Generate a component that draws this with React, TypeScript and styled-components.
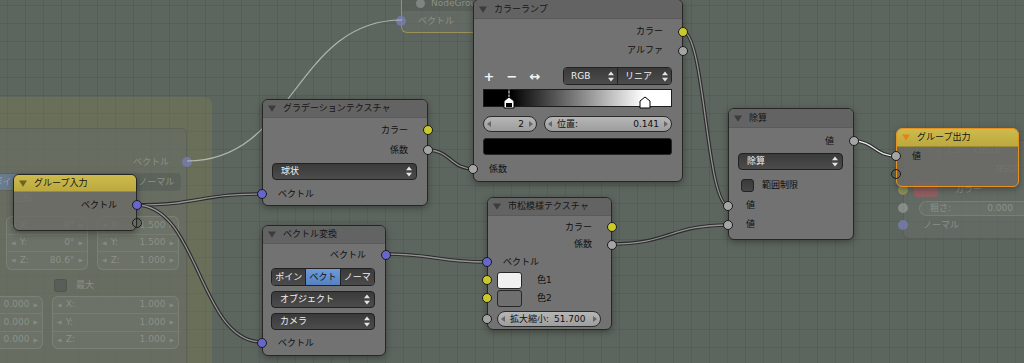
import styled, { createGlobalStyle } from 'styled-components'

const YELLOW = '#c9c92e'
const GRAY = '#a4a4a4'
const BLUE = '#6666cc'

const GlobalStyle = createGlobalStyle`
  html, body { margin: 0; padding: 0; }
  body {
    background: #5d665e;
    font-family: "DejaVu Sans", "Noto Sans CJK JP", sans-serif;
    font-size: 9px;
    line-height: 1;
  }
`

const Canvas = styled.div`
  position: relative;
  width: 1024px;
  height: 363px;
  overflow: hidden;
  background-color: #5d665e;
  background-image: linear-gradient(rgba(0, 0, 0, 0.07) 1px, transparent 1px),
    linear-gradient(90deg, rgba(0, 0, 0, 0.07) 1px, transparent 1px);
  background-size: 18px 18px;
  background-position: 7px 5px;
`

/* ---------- ghost (faded) layer ---------- */

const Frame = styled.div`
  position: absolute;
  left: -20px;
  top: 97px;
  width: 232px;
  height: 300px;
  border-radius: 8px;
  background: rgba(135, 132, 78, 0.33);
`

const Ghost = styled.div<{ $x: number; $y: number; $w: number; $h: number; $frame?: boolean }>`
  position: absolute;
  left: ${p => p.$x}px;
  top: ${p => p.$y}px;
  width: ${p => p.$w}px;
  height: ${p => p.$h}px;
  box-sizing: border-box;
  border-radius: 6px;
  border: 1px solid ${p => (p.$frame ? 'rgba(200, 180, 80, 0.55)' : 'rgba(0, 0, 0, 0.1)')};
  background: rgba(102, 108, 104, 0.6);
  color: #8b9087;
  display: flex;
  flex-direction: column;
`

const GhostHeader = styled.div`
  height: 22px;
  flex: none;
  display: flex;
  align-items: flex-end;
  gap: 6px;
  padding: 0 0 3px 14px;
  box-sizing: border-box;
  background: rgba(80, 86, 82, 0.5);
  border-radius: 5px 5px 0 0;
`

const GhostTitle = styled.div`
  height: 18px;
  flex: none;
  display: flex;
  align-items: center;
  padding-left: 22px;
  color: rgba(150, 155, 148, 0.55);
`

const GhostRow = styled.div<{ $h?: number; $mt?: number; $out?: boolean; $pl?: number; $pr?: number }>`
  position: relative;
  flex: none;
  height: ${p => p.$h ?? 20}px;
  margin-top: ${p => p.$mt ?? 0}px;
  display: flex;
  align-items: center;
  justify-content: ${p => (p.$out ? 'flex-end' : 'flex-start')};
  padding-left: ${p => p.$pl ?? 0}px;
  padding-right: ${p => p.$pr ?? 0}px;
  gap: 9px;
`

const GhostSocket = styled.span<{ $c: string; $side: 'l' | 'r' }>`
  position: absolute;
  top: 50%;
  width: 10px;
  height: 10px;
  margin-top: -5px;
  border-radius: 50%;
  background: ${p => p.$c};
  ${p => (p.$side === 'l' ? 'left: -6px;' : 'right: -6px;')}
`

const GhostSegs = styled.div`
  display: flex;
  height: 16px;
  width: 192px;
  border-radius: 4px;
  overflow: hidden;
  border: 1px solid rgba(0, 0, 0, 0.08);
`

const GhostSeg = styled.div<{ $on?: boolean }>`
  flex: 1;
  display: flex;
  align-items: center;
  justify-content: center;
  white-space: nowrap;
  overflow: hidden;
  background: ${p => (p.$on ? 'rgba(110, 135, 175, 0.55)' : 'rgba(80, 86, 82, 0.45)')};
  color: ${p => (p.$on ? 'rgba(150, 170, 200, 0.8)' : '#8d9289')};
  & + & {
    border-left: 1px solid rgba(0, 0, 0, 0.08);
  }
`

const GhostBlock = styled.div<{ $w: number }>`
  width: ${p => p.$w}px;
  box-sizing: border-box;
  border: 1px solid rgba(175, 180, 170, 0.22);
  border-radius: 6px;
  background: rgba(150, 156, 148, 0.12);
  display: flex;
  flex-direction: column;
`

const GhostField = styled.div`
  height: 16.5px;
  display: flex;
  align-items: center;
  gap: 4px;
  padding: 0 4px;
  & + & {
    border-top: 1px solid rgba(175, 180, 170, 0.16);
  }
`

const GhostValue = styled.span`
  flex: 1;
  text-align: right;
`

const GhostArrow = styled.span`
  font-size: 6px;
  color: rgba(150, 155, 145, 0.6);
`

const GhostBlocks = styled.div<{ $mt: number; $pl: number }>`
  display: flex;
  gap: 9px;
  margin-top: ${p => p.$mt}px;
  padding-left: ${p => p.$pl}px;
`

const GhostCheck = styled.span`
  width: 11px;
  height: 11px;
  border-radius: 3px;
  background: rgba(80, 86, 82, 0.6);
  border: 1px solid rgba(0, 0, 0, 0.1);
`

const GhostSwatch = styled.span`
  width: 24px;
  height: 15px;
  border-radius: 3px;
  background: rgba(200, 80, 95, 0.45);
`

const GhostPill = styled.div`
  flex: 1;
  height: 15px;
  box-sizing: border-box;
  border-radius: 8px;
  border: 1px solid rgba(175, 180, 170, 0.22);
  background: rgba(150, 156, 148, 0.12);
  display: flex;
  align-items: center;
  justify-content: space-between;
  padding: 0 0 0 10px;
`

const GhostDot = styled.span`
  width: 9px;
  height: 9px;
  border-radius: 50%;
  background: rgba(170, 170, 170, 0.5);
`

/* ---------- real nodes ---------- */

const Node = styled.div<{ $x: number; $y: number; $w: number; $group?: boolean; $active?: boolean }>`
  position: absolute;
  left: ${p => p.$x}px;
  top: ${p => p.$y}px;
  width: ${p => p.$w}px;
  box-sizing: border-box;
  border: 1px solid ${p => (p.$active ? '#e8921e' : '#262626')};
  border-radius: 6px;
  background: ${p => (p.$group ? 'rgba(108, 107, 102, 0.82)' : '#727272')};
  box-shadow: 0 2px 7px rgba(0, 0, 0, 0.35);
  color: #0f0f0f;
`

const Header = styled.div<{ $h: number; $group?: boolean }>`
  height: ${p => p.$h}px;
  display: flex;
  align-items: center;
  gap: 7px;
  padding-left: 5px;
  border-radius: 5px 5px 0 0;
  background: ${p => (p.$group ? 'linear-gradient(#cdbb4d, #bca93f)' : '#636363')};
  border-bottom: 1px solid ${p => (p.$group ? '#9d8c33' : '#5a5a5a')};
  box-sizing: border-box;
  color: #151515;
  white-space: nowrap;
`

const Body = styled.div<{ $pt?: number; $pb?: number }>`
  padding-top: ${p => p.$pt ?? 0}px;
  padding-bottom: ${p => p.$pb ?? 0}px;
  display: flex;
  flex-direction: column;
`

const Row = styled.div<{ $h?: number; $mt?: number; $out?: boolean; $pl?: number }>`
  position: relative;
  height: ${p => p.$h ?? 20}px;
  margin-top: ${p => p.$mt ?? 0}px;
  display: flex;
  align-items: center;
  justify-content: ${p => (p.$out ? 'flex-end' : 'flex-start')};
  padding: ${p => (p.$out ? '0 19px 0 0' : `0 0 0 ${p.$pl ?? 15}px`)};
`

const Socket = styled.span<{ $c?: string; $side: 'l' | 'r' }>`
  position: absolute;
  top: 50%;
  width: 10px;
  height: 10px;
  margin-top: -5px;
  box-sizing: border-box;
  border-radius: 50%;
  border: 1px solid #1a1a1a;
  background: ${p => p.$c ?? 'transparent'};
  ${p => (p.$side === 'l' ? 'left: -6px;' : 'right: -6px;')}
`

const Pad = styled.div<{ $mt?: number; $pl: number; $pr: number }>`
  position: relative;
  margin-top: ${p => p.$mt ?? 0}px;
  padding: 0 ${p => p.$pr}px 0 ${p => p.$pl}px;
`

const Select = styled.div<{ $h?: number }>`
  height: ${p => p.$h ?? 17}px;
  box-sizing: border-box;
  display: flex;
  align-items: center;
  justify-content: space-between;
  padding: 0 4px 0 8px;
  border: 1px solid #212121;
  border-radius: 4px;
  background: linear-gradient(#3a3a3a, #4c4c4c);
  color: #f0f0f0;
`

const SelectPair = styled.div`
  display: flex;
  width: 109px;
  height: 18px;
  box-sizing: border-box;
  border: 1px solid #212121;
  border-radius: 4px;
  overflow: hidden;
  margin-left: auto;
  font-size: 9px;
  font-weight: normal;
`

const PairPart = styled.div`
  flex: 1;
  display: flex;
  align-items: center;
  justify-content: space-between;
  padding: 0 3px 0 7px;
  background: linear-gradient(#3a3a3a, #4c4c4c);
  color: #f0f0f0;
  & + & {
    border-left: 1px solid #212121;
  }
`

const Segments = styled.div`
  display: flex;
  height: 18px;
  box-sizing: border-box;
  border: 1px solid #212121;
  border-radius: 4px;
  overflow: hidden;
`

const Segment = styled.div<{ $on?: boolean }>`
  flex: 1;
  display: flex;
  align-items: center;
  justify-content: center;
  background: ${p => (p.$on ? 'linear-gradient(#6f9ad8, #5581c3)' : 'linear-gradient(#3b3b3b, #4b4b4b)')};
  color: ${p => (p.$on ? '#101010' : '#f0f0f0')};
  & + & {
    border-left: 1px solid #212121;
  }
`

const NumField = styled.div<{ $w?: number }>`
  ${p => (p.$w ? `width: ${p.$w}px;` : 'flex: 1;')}
  height: 16px;
  box-sizing: border-box;
  border: 1px solid #2b2b2b;
  border-radius: 8px;
  background: linear-gradient(#b6b6b6, #9d9d9d);
  display: flex;
  align-items: center;
  gap: 5px;
  padding: 0 3px;
  color: #101010;
`

const NumLabel = styled.span`
  white-space: nowrap;
`

const NumValue = styled.span<{ $left?: boolean }>`
  flex: 1;
  text-align: ${p => (p.$left ? 'left' : 'right')};
`

const Arrow = ({ dir }: { dir: 'l' | 'r' }) => (
  <svg width="4" height="6" viewBox="0 0 4 6">
    <path d={dir === 'l' ? 'M4 0 L0 3 L4 6 Z' : 'M0 0 L4 3 L0 6 Z'} fill="#666" />
  </svg>
)

const UpDown = () => (
  <svg width="6" height="11" viewBox="0 0 6 11">
    <path d="M3 0.5 L6 4.3 H0 Z M3 10.5 L6 6.7 H0 Z" fill="#e4e4e4" />
  </svg>
)

const Tri = ({ color = '#3c3c3c' }: { color?: string }) => (
  <svg width="8" height="7" viewBox="0 0 8 7">
    <path d="M0 0.5 H8 L4 6.8 Z" fill={color} />
  </svg>
)

const RampTools = styled.div`
  display: flex;
  align-items: center;
  height: 18px;
  margin-top: 7px;
  padding: 0 10px 0 4px;
  color: #f4f4f4;
`

const Tool = styled.span<{ $w: number }>`
  width: ${p => p.$w}px;
  text-align: center;
  font-size: 13px;
  font-weight: bold;
`

const RampBar = styled.div`
  position: relative;
  height: 18px;
  margin: 4px 10px 0 9px;
  box-sizing: border-box;
  border: 1px solid #1c1c1c;
  background: linear-gradient(90deg, #000 0%, #000 14.1%, #fff 85.7%, #fff 100%);
`

const RampMarks = styled.svg`
  position: absolute;
  left: -1px;
  top: -1px;
`

const FieldRow = styled.div<{ $mt: number }>`
  display: flex;
  gap: 7px;
  margin: ${p => p.$mt}px 10px 0 9px;
`

const Swatch = styled.div<{ $c: string; $w?: number }>`
  ${p => (p.$w ? `width: ${p.$w}px;` : 'flex: 1;')}
  height: 17px;
  box-sizing: border-box;
  border: 1px solid #262626;
  border-radius: 3px;
  background: ${p => p.$c};
`

const Check = styled.span`
  width: 13px;
  height: 13px;
  box-sizing: border-box;
  border: 1px solid #222;
  border-radius: 3px;
  background: linear-gradient(#3a3a3a, #474747);
  margin-right: 8px;
`

const WireLayer = styled.svg`
  position: absolute;
  left: 0;
  top: 0;
`

type Link = { x1: number; y1: number; x2: number; y2: number; active?: boolean }

const links: Link[] = [
  { x1: 136, y1: 205, x2: 262, y2: 194 },
  { x1: 136, y1: 205, x2: 262, y2: 342 },
  { x1: 427, y1: 150, x2: 474, y2: 169 },
  { x1: 385, y1: 254, x2: 487, y2: 262 },
  { x1: 682, y1: 31, x2: 729, y2: 206 },
  { x1: 611, y1: 244, x2: 729, y2: 225 },
  { x1: 853, y1: 141, x2: 896, y2: 156, active: true },
]

const curve = ({ x1, y1, x2, y2 }: Link) => {
  const d = Math.max(Math.abs(x2 - x1) * 0.5, 20)
  return `M${x1} ${y1} C${x1 + d} ${y1} ${x2 - d} ${y2} ${x2} ${y2}`
}

const Wires = () => (
  <WireLayer width="1024" height="363">
    <path
      d={curve({ x1: 187, y1: 161, x2: 402, y2: 20 })}
      fill="none"
      stroke="rgba(205,210,205,0.75)"
      strokeWidth="1.2"
    />
    {links.map((l, i) => (
      <g key={i}>
        <path d={curve(l)} fill="none" stroke="#2c2c2c" strokeWidth="3.6" />
        <path d={curve(l)} fill="none" stroke={l.active ? '#eaeaea' : '#939393'} strokeWidth="1.3" />
      </g>
    ))}
  </WireLayer>
)

const GhostLayer = () => (
  <>
    <Frame />
    <Ghost $x={-30} $y={128} $w={217} $h={260}>
      <GhostRow $mt={23} $out $pr={17}>
        ベクトル
        <GhostSocket $c="rgba(120,125,175,0.8)" $side="r" />
      </GhostRow>
      <GhostRow $h={16} $mt={2} $pl={16}>
        <GhostSegs>
          <GhostSeg $on>ポイント</GhostSeg>
          <GhostSeg />
          <GhostSeg />
          <GhostSeg>ノーマル</GhostSeg>
        </GhostSegs>
      </GhostRow>
      <GhostRow $h={16} $pl={43}>
        回転:
      </GhostRow>
      <GhostBlocks $mt={10} $pl={35}>
        <GhostBlock $w={82}>
          <GhostField><GhostArrow>◀</GhostArrow>X:<GhostValue>0°</GhostValue><GhostArrow>▶</GhostArrow></GhostField>
          <GhostField><GhostArrow>◀</GhostArrow>Y:<GhostValue>0°</GhostValue><GhostArrow>▶</GhostArrow></GhostField>
          <GhostField><GhostArrow>◀</GhostArrow>Z:<GhostValue>80.6°</GhostValue><GhostArrow>▶</GhostArrow></GhostField>
        </GhostBlock>
        <GhostBlock $w={82}>
          <GhostField><GhostArrow>◀</GhostArrow>X:<GhostValue>1.500</GhostValue><GhostArrow>▶</GhostArrow></GhostField>
          <GhostField><GhostArrow>◀</GhostArrow>Y:<GhostValue>1.500</GhostValue><GhostArrow>▶</GhostArrow></GhostField>
          <GhostField><GhostArrow>◀</GhostArrow>Z:<GhostValue>1.000</GhostValue><GhostArrow>▶</GhostArrow></GhostField>
        </GhostBlock>
      </GhostBlocks>
      <GhostRow $h={14} $mt={9} $pl={83}>
        <GhostCheck />
        最大
      </GhostRow>
      <GhostBlocks $mt={3} $pl={0}>
        <GhostBlock $w={72}>
          <GhostField><GhostValue>0.000</GhostValue><GhostArrow>▶</GhostArrow></GhostField>
          <GhostField><GhostValue>0.000</GhostValue><GhostArrow>▶</GhostArrow></GhostField>
          <GhostField><GhostValue>0.000</GhostValue><GhostArrow>▶</GhostArrow></GhostField>
        </GhostBlock>
        <GhostBlock $w={127}>
          <GhostField><GhostArrow>◀</GhostArrow>X:<GhostValue>1.000</GhostValue><GhostArrow>▶</GhostArrow></GhostField>
          <GhostField><GhostArrow>◀</GhostArrow>Y:<GhostValue>1.000</GhostValue><GhostArrow>▶</GhostArrow></GhostField>
          <GhostField><GhostArrow>◀</GhostArrow>Z:<GhostValue>1.000</GhostValue><GhostArrow>▶</GhostArrow></GhostField>
        </GhostBlock>
      </GhostBlocks>
    </Ghost>

    <Ghost $x={401} $y={-12} $w={110} $h={45} $frame>
      <GhostHeader>
        <GhostDot />
        NodeGroup
      </GhostHeader>
      <GhostRow $pl={16}>
        ベクトル
        <GhostSocket $c="rgba(120,125,175,0.85)" $side="l" />
      </GhostRow>
    </Ghost>

    <Ghost $x={903} $y={140} $w={140} $h={99}>
      <GhostTitle>ディフューズBSDF</GhostTitle>
      <GhostRow $out $h={20} $pr={22}>
        BSDF
      </GhostRow>
      <GhostRow $h={17} $mt={2} $pl={10}>
        <GhostSwatch />
        <span style={{ marginLeft: 8 }}>カラー</span>
        <GhostSocket $c="rgba(160,160,90,0.7)" $side="l" />
      </GhostRow>
      <GhostRow $h={16} $mt={2} $pl={15}>
        <GhostPill>
          粗さ:<span style={{ marginRight: 28 }}>0.000</span>
        </GhostPill>
        <GhostSocket $c="rgba(160,165,160,0.6)" $side="l" />
      </GhostRow>
      <GhostRow $h={18} $pl={19}>
        ノーマル
        <GhostSocket $c="rgba(120,125,180,0.75)" $side="l" />
      </GhostRow>
    </Ghost>
  </>
)

export default function App() {
  return (
    <>
      <GlobalStyle />
      <Canvas>
        <GhostLayer />
        <Wires />

        <Node $x={13} $y={174} $w={124} $group>
          <Header $h={17} $group>
            <Tri color="#6d621f" />
            グループ入力
          </Header>
          <Body $pt={3}>
            <Row $out>
              ベクトル
              <Socket $c={BLUE} $side="r" />
            </Row>
            <Row $h={15} $out>
              <Socket $side="r" />
            </Row>
          </Body>
        </Node>

        <Node $x={262} $y={99} $w={166}>
          <Header $h={18}>
            <Tri />
            グラデーションテクスチャ
          </Header>
          <Body $pt={2} $pb={1}>
            <Row $out>
              カラー
              <Socket $c={YELLOW} $side="r" />
            </Row>
            <Row $out>
              係数
              <Socket $c={GRAY} $side="r" />
            </Row>
            <Pad $mt={3} $pl={9} $pr={10}>
              <Select>
                球状
                <UpDown />
              </Select>
            </Pad>
            <Row $mt={4}>
              ベクトル
              <Socket $c={BLUE} $side="l" />
            </Row>
          </Body>
        </Node>

        <Node $x={262} $y={225} $w={124}>
          <Header $h={18}>
            <Tri />
            ベクトル変換
          </Header>
          <Body $pt={1} $pb={2}>
            <Row $out>
              ベクトル
              <Socket $c={BLUE} $side="r" />
            </Row>
            <Pad $mt={3} $pl={8} $pr={10}>
              <Segments>
                <Segment>ポイン</Segment>
                <Segment $on>ベクト</Segment>
                <Segment>ノーマ</Segment>
              </Segments>
            </Pad>
            <Pad $mt={5} $pl={8} $pr={10}>
              <Select>
                オブジェクト
                <UpDown />
              </Select>
            </Pad>
            <Pad $mt={5} $pl={8} $pr={10}>
              <Select>
                カメラ
                <UpDown />
              </Select>
            </Pad>
            <Row $mt={3}>
              ベクトル
              <Socket $c={BLUE} $side="l" />
            </Row>
          </Body>
        </Node>

        <Node $x={473} $y={-1} $w={210}>
          <Header $h={19}>
            <Tri />
            カラーランプ
          </Header>
          <Body $pt={3} $pb={2}>
            <Row $h={19} $out>
              カラー
              <Socket $c={YELLOW} $side="r" />
            </Row>
            <Row $h={19} $out>
              アルファ
              <Socket $c={GRAY} $side="r" />
            </Row>
            <RampTools>
              <Tool $w={22}>+</Tool>
              <Tool $w={24}>−</Tool>
              <Tool $w={22}>↔</Tool>
              <SelectPair>
                <PairPart>
                  RGB
                  <UpDown />
                </PairPart>
                <PairPart>
                  リニア
                  <UpDown />
                </PairPart>
              </SelectPair>
            </RampTools>
            <RampBar>
              <RampMarks width="189" height="20" viewBox="0 0 189 20">
                <line x1="26" y1="0" x2="26" y2="9" stroke="#fff" strokeWidth="1" />
                <line x1="26" y1="0" x2="26" y2="9" stroke="#000" strokeWidth="1" strokeDasharray="2 2" />
                <path d="M26 8 L31 12 V19 H21 V12 Z" fill="#fff" stroke="#000" strokeWidth="1" />
                <rect x="23" y="14" width="6" height="4" fill="#000" />
                <path d="M162 8 L167 12 V19 H157 V12 Z" fill="#fff" stroke="#000" strokeWidth="1" />
              </RampMarks>
            </RampBar>
            <FieldRow $mt={9}>
              <NumField $w={54}>
                <Arrow dir="l" />
                <NumValue>2</NumValue>
                <Arrow dir="r" />
              </NumField>
              <NumField>
                <Arrow dir="l" />
                <NumLabel>位置:</NumLabel>
                <NumValue>0.141</NumValue>
                <Arrow dir="r" />
              </NumField>
            </FieldRow>
            <FieldRow $mt={6}>
              <Swatch $c="#000" />
            </FieldRow>
            <Row $mt={4}>
              係数
              <Socket $c={GRAY} $side="l" />
            </Row>
          </Body>
        </Node>

        <Node $x={487} $y={197} $w={125}>
          <Header $h={18}>
            <Tri />
            市松模様テクスチャ
          </Header>
          <Body $pt={2} $pb={2}>
            <Row $h={18} $out>
              カラー
              <Socket $c={YELLOW} $side="r" />
            </Row>
            <Row $h={17} $out>
              係数
              <Socket $c={GRAY} $side="r" />
            </Row>
            <Row $h={18}>
              ベクトル
              <Socket $c={BLUE} $side="l" />
            </Row>
            <Row $h={18} $pl={9}>
              <Swatch $c="#f0f0f0" $w={25} />
              <span style={{ marginLeft: 15 }}>色1</span>
              <Socket $c={YELLOW} $side="l" />
            </Row>
            <Row $h={18} $pl={9}>
              <Swatch $c="#6f6f6f" $w={25} />
              <span style={{ marginLeft: 15 }}>色2</span>
              <Socket $c={YELLOW} $side="l" />
            </Row>
            <Row $h={16} $mt={4} $pl={9}>
              <NumField $w={104}>
                <Arrow dir="l" />
                <NumLabel>拡大縮小:</NumLabel>
                <NumValue $left>51.700</NumValue>
                <Arrow dir="r" />
              </NumField>
              <Socket $c={GRAY} $side="l" />
            </Row>
          </Body>
        </Node>

        <Node $x={728} $y={108} $w={126}>
          <Header $h={19}>
            <Tri />
            除算
          </Header>
          <Body $pt={3} $pb={5}>
            <Row $out>
              値
              <Socket $c={GRAY} $side="r" />
            </Row>
            <Pad $mt={2} $pl={9} $pr={10}>
              <Select>
                除算
                <UpDown />
              </Select>
            </Pad>
            <Row $mt={5} $pl={12}>
              <Check />
              範囲制限
            </Row>
            <Row $h={19} $mt={1} $pl={17}>
              値
              <Socket $c={GRAY} $side="l" />
            </Row>
            <Row $h={19} $pl={17}>
              値
              <Socket $c={GRAY} $side="l" />
            </Row>
          </Body>
        </Node>

        <Node $x={896} $y={128} $w={123} $group $active>
          <Header $h={18} $group>
            <Tri color="#e9801a" />
            グループ出力
          </Header>
          <Body $pb={3}>
            <Row $h={18}>
              値
              <Socket $c={GRAY} $side="l" />
            </Row>
            <Row $h={18}>
              <Socket $side="l" />
            </Row>
          </Body>
        </Node>
      </Canvas>
    </>
  )
}
